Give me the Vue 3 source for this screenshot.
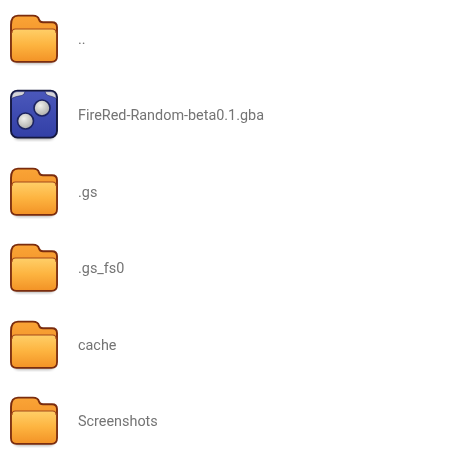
<script setup>
const rows = [
  { name: '..', icon: 'folder' },
  { name: 'FireRed-Random-beta0.1.gba', icon: 'rom' },
  { name: '.gs', icon: 'folder' },
  { name: '.gs_fs0', icon: 'folder' },
  { name: 'cache', icon: 'folder' },
  { name: 'Screenshots', icon: 'folder' },
]
</script>

<template>
  <div class="list">
    <div v-for="(r, i) in rows" :key="i" class="row">
      <svg v-if="r.icon === 'folder'" class="icon" viewBox="0 0 52 54" width="52" height="54">
        <defs>
          <linearGradient :id="'front' + i" x1="0" y1="0" x2="0" y2="1">
            <stop offset="0" stop-color="#ffcf68" />
            <stop offset="0.5" stop-color="#fdb440" />
            <stop offset="1" stop-color="#f39427" />
          </linearGradient>
          <linearGradient :id="'back' + i" x1="0" y1="0" x2="0" y2="1">
            <stop offset="0" stop-color="#faa436" />
            <stop offset="1" stop-color="#ec8620" />
          </linearGradient>
          <filter :id="'sh' + i" x="-20%" y="-20%" width="140%" height="140%">
            <feGaussianBlur stdDeviation="1.8" />
          </filter>
        </defs>
        <rect x="5" y="32" width="42" height="20" rx="6" fill="#000" opacity="0.28" :filter="`url(#sh${i})`" />
        <path d="M3 13 Q3 3.6 10 3.6 H25 Q30 3.6 31 7.4 Q31.8 10.2 35 10.2 H44 Q49 10.2 49 15 V44 Q49 49.8 43.5 49.8 H8.5 Q3 49.8 3 44 Z" :fill="`url(#back${i})`" stroke="#7a2c0e" stroke-width="1.9" />
        <path d="M3.9 21 Q3.9 17 7.4 17 H44.6 Q48.1 17 48.1 21 V44 Q48.1 48.9 43.5 48.9 H8.5 Q3.9 48.9 3.9 44 Z" :fill="`url(#front${i})`" />
        <path d="M3.9 21 Q3.9 17 7.4 17 H44.6 Q48.1 17 48.1 21" fill="none" stroke="#a4481a" stroke-width="1.1" />
      </svg>
      <svg v-else class="icon" viewBox="0 0 52 54" width="52" height="54">
        <defs>
          <linearGradient id="romBody" x1="0" y1="0" x2="0" y2="1">
            <stop offset="0" stop-color="#4b58bb" />
            <stop offset="1" stop-color="#323fa6" />
          </linearGradient>
          <radialGradient id="btn" cx="0.4" cy="0.35" r="0.75">
            <stop offset="0" stop-color="#f0f0ec" />
            <stop offset="1" stop-color="#a4a4a0" />
          </radialGradient>
          <filter id="romSh" x="-20%" y="-20%" width="140%" height="140%">
            <feGaussianBlur stdDeviation="1.6" />
          </filter>
        </defs>
        <rect x="5" y="34" width="42" height="18" rx="6" fill="#000" opacity="0.28" filter="url(#romSh)" />
        <rect x="3" y="2.6" width="46" height="47" rx="6.5" fill="url(#romBody)" stroke="#14183f" stroke-width="1.9" />
        <path d="M3.6 10.5 Q4 3.8 9 3.6 H17 Q16.4 6.8 14 7.4 Q7 8.4 3.6 10.5 Z" fill="#d4d4d8" stroke="#1b2060" stroke-width="0.6" />
        <path d="M48.4 10.5 Q48 3.8 43 3.6 H37 Q37.6 6.8 40 7.4 Q45 8.4 48.4 10.5 Z" fill="#d4d4d8" stroke="#1b2060" stroke-width="0.6" />
        <circle cx="34" cy="20" r="8" fill="url(#btn)" stroke="#1c2360" stroke-width="1.6" />
        <circle cx="17.5" cy="33" r="8" fill="url(#btn)" stroke="#1c2360" stroke-width="1.6" />
      </svg>
      <span class="name">{{ r.name }}</span>
    </div>
  </div>
</template>

<style scoped>
.list {
  width: 450px;
  height: 453px;
  overflow: hidden;
  background: #ffffff;
  padding-top: 0.8px;
  box-sizing: border-box;
  filter: blur(0.35px);
}
.row {
  display: flex;
  align-items: center;
  height: 76.4px;
  padding-left: 8px;
}
.icon {
  flex: none;
  display: block;
}
.name {
  margin-left: 18px;
  padding-top: 1px;
  font-family: Roboto, "Liberation Sans", sans-serif;
  font-size: 14.4px;
  color: #747474;
}
</style>
